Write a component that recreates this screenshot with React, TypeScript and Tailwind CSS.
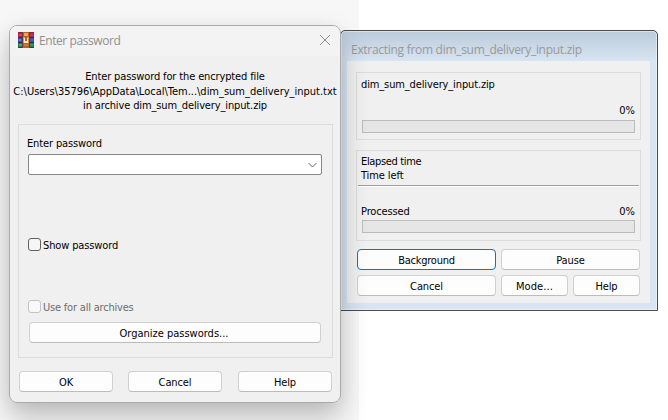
import type { ReactNode } from "react";

function Button({ children, className = "" }: { children: ReactNode; className?: string }) {
  return (
    <button
      className={`flex h-[21px] items-center justify-center rounded-[4px] border bg-[#fdfdfd] pt-[2px] leading-[14px] ${className}`}
    >
      {children}
    </button>
  );
}

const plain = "border-[#d0d0d0] border-b-[#bcbcbc]";

function ArchiveIcon() {
  return (
    <svg width="16" height="16" viewBox="0 0 16 16" shapeRendering="crispEdges">
      <rect width="16" height="5" fill="#b32643" />
      <rect width="16" height="1" fill="#8c2444" />
      <rect x="1" y="2" width="3" height="2" fill="#d8455a" />
      <rect x="12" y="2" width="3" height="2" fill="#cf3448" />
      <rect y="5" width="16" height="5" fill="#3a4fb0" />
      <rect y="5" width="16" height="1" fill="#3b2560" />
      <rect x="1" y="7" width="2" height="2" fill="#5a85dd" />
      <rect x="13" y="7" width="2" height="2" fill="#3468d2" />
      <rect y="10" width="16" height="6" fill="#28784a" />
      <rect y="10" width="16" height="1" fill="#1c3350" />
      <rect x="1" y="12" width="3" height="2" fill="#4aa873" />
      <rect x="12" y="12" width="3" height="2" fill="#2e9a50" />
      <rect y="15" width="16" height="1" fill="#1d4b34" />
      <rect x="4" width="1" height="16" fill="#6a3440" />
      <rect x="11" width="1" height="16" fill="#6a3440" />
      <rect x="5" width="6" height="16" fill="#b5622c" />
      <rect x="6" y="1" width="4" height="3" fill="#f0a850" />
      <rect x="5" y="5" width="6" height="6" fill="#e09a46" />
      <rect x="6" y="6" width="4" height="5" fill="#f8e4cc" />
      <rect x="7" y="5" width="2" height="4" fill="#b86424" />
      <rect x="6" y="12" width="4" height="2" fill="#d0783a" />
    </svg>
  );
}

function Progress() {
  return <div className="h-[13px] border border-[#bcbcbc] bg-[#e6e6e6]" />;
}

function ExtractWindow() {
  return (
    <section className="absolute left-[340px] top-[30px] flex h-[281px] w-[318px] flex-col rounded-t-[5px] border border-[#4a4b4d] bg-[#d7e4f2] bg-linear-to-b from-[#bccbda] to-[#d7e4f2] to-[30px] pb-[7px] pl-[6px] pr-[7px] shadow-[inset_0_0_0_1px_rgba(255,255,255,0.45)]">
      <h1 className="h-[30px] whitespace-nowrap pl-[4px] pt-[11px] font-['Open_Sans',sans-serif] text-[12px] leading-[16px] tracking-[-0.29px] text-[#999]">
        Extracting from dim_sum_delivery_input.zip
      </h1>
      <div className="flex grow flex-col bg-[#f0f0f0] px-[9px] pt-[11px]">
        <div className="h-[68px] border border-[#dcdcdc] px-[5px] pt-[4px]">
          <p className="-ml-px leading-[15px]">dim_sum_delivery_input.zip</p>
          <p className="mb-[2px] mt-[12px] text-right leading-[14px] tracking-normal">0%</p>
          <Progress />
        </div>
        <div className="mt-[10px] h-[91px] border border-[#dcdcdc] px-[5px] pt-[4px]">
          <p className="-ml-px leading-[14px] tracking-[-0.35px]">Elapsed time</p>
          <p className="-ml-px leading-[14px] tracking-[-0.1px]">Time left</p>
          <div className="-ml-[4px] -mr-[4px] mt-[2px] h-[2px] border-b border-t border-b-white border-t-[#a0a0a0]" />
          <div className="mb-[1px] mt-[18px] flex justify-between leading-[14px]">
            <span className="-ml-px">Processed</span>
            <span className="tracking-normal">0%</span>
          </div>
          <Progress />
        </div>
        <div className="ml-[1px] mt-[8px] flex gap-[5px]">
          <Button className="w-[139px] border-[#0078d4] tracking-[-0.25px]">Background</Button>
          <Button className={`w-[139px] ${plain}`}>Pause</Button>
        </div>
        <div className="ml-[1px] mt-[5px] flex gap-[5px]">
          <Button className={`w-[139px] ${plain}`}>Cancel</Button>
          <Button className={`w-[67px] tracking-[0.1px] ${plain}`}>Mode...</Button>
          <Button className={`w-[67px] ${plain}`}>Help</Button>
        </div>
      </div>
    </section>
  );
}

function PasswordDialog() {
  return (
    <section className="absolute left-[9px] top-[25px] flex h-[378px] w-[332px] flex-col overflow-hidden rounded-[8px] border border-[#aaa] bg-[#f0f0f0]">
      <header className="flex h-[30px] items-center bg-[#f3f3f3] pb-[2px] pl-[8px] pr-[9px]">
        <ArchiveIcon />
        <h1 className="ml-[5px] mt-[2px] grow font-['Open_Sans',sans-serif] text-[12px] leading-[16px] tracking-[-0.42px] text-[#919191]">
          Enter password
        </h1>
        <svg width="12" height="12" viewBox="0 0 12 12" fill="none" stroke="#8e8e8e">
          <path d="M1 1l10 10M11 1L1 11" />
        </svg>
      </header>
      <div className="mt-[14px] h-[43px] whitespace-nowrap text-center leading-[14.5px]">
        <p>Enter password for the encrypted file</p>
        <p className="tracking-[-0.01px]">C:\Users\35796\AppData\Local\Tem...\dim_sum_delivery_input.txt</p>
        <p>in archive dim_sum_delivery_input.zip</p>
      </div>
      <div className="ml-[8px] mt-[11px] flex h-[234px] w-[315px] flex-col border border-[#dcdcdc] px-[9px]">
        <label className="-ml-px mt-[12px] leading-[14px]">Enter password</label>
        <div className="mt-[3px] flex h-[21px] w-[294px] items-center justify-end rounded-[2px] border border-[#868686] bg-white pr-[4px]">
          <svg width="9" height="6" viewBox="0 0 9 6" fill="none" stroke="#606060">
            <path d="M0.5 1l4 4 4-4" />
          </svg>
        </div>
        <div className="mt-[63px] flex h-[13px] items-center gap-[2px]">
          <span className="h-[13px] w-[13px] rounded-[3px] border border-[#626262] bg-[#f5f5f5]" />
          <span className="pt-[3px] leading-[14px]">Show password</span>
        </div>
        <div className="mt-[49px] flex h-[13px] items-center gap-[2px] text-[#6d6d6d]">
          <span className="h-[13px] w-[13px] rounded-[3px] border border-[#c3c3c3] bg-[#f9f9f9]" />
          <span className="pt-[3px] leading-[14px] tracking-[-0.2px]">Use for all archives</span>
        </div>
        <Button className={`ml-[1px] mt-[9px] w-[292px] pr-[2px] tracking-normal ${plain}`}>
          Organize passwords...
        </Button>
      </div>
      <div className="ml-[9px] mt-[13px] flex">
        <Button className={`w-[94px] ${plain}`}>OK</Button>
        <Button className={`ml-[15px] w-[94px] ${plain}`}>Cancel</Button>
        <Button className={`ml-[16px] w-[94px] ${plain}`}>Help</Button>
      </div>
    </section>
  );
}

export default function App() {
  return (
    <main className="relative h-[420px] w-[668px] overflow-hidden bg-white font-['DejaVu_Sans_Condensed','DejaVu_Sans',sans-serif] text-[11px] tracking-[-0.13px] text-black">
      <div className="h-[420px] w-[359px] bg-[#f7f7f7]" />
      <ExtractWindow />
      <div className="absolute left-[9px] top-[25px] h-[378px] w-[332px] rounded-[8px] shadow-[0_14px_28px_rgba(0,0,0,0.24),0_2px_14px_rgba(0,0,0,0.04)]" />
      <PasswordDialog />
    </main>
  );
}
